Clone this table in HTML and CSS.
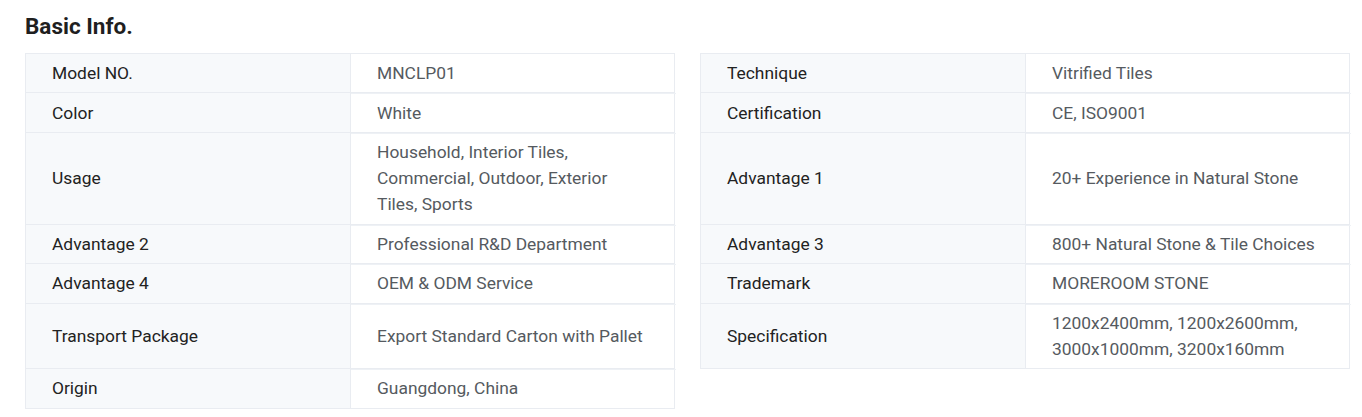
FILE: index.html
```html
<!DOCTYPE html>
<html lang="en">
<head>
<meta charset="utf-8">
<title>Basic Info.</title>
<link rel="stylesheet" href="styles.css">
</head>
<body>
<section class="basic-info">
  <h2 class="title">Basic Info.</h2>
  <div class="specs">
    <div class="spec-row">
      <div class="pair"><div class="label">Model NO.</div><div class="value">MNCLP01</div></div>
      <div class="pair"><div class="label">Technique</div><div class="value">Vitrified Tiles</div></div>
    </div>
    <div class="spec-row">
      <div class="pair"><div class="label">Color</div><div class="value">White</div></div>
      <div class="pair"><div class="label">Certification</div><div class="value">CE, ISO9001</div></div>
    </div>
    <div class="spec-row">
      <div class="pair"><div class="label">Usage</div><div class="value">Household, Interior Tiles, Commercial, Outdoor, Exterior Tiles, Sports</div></div>
      <div class="pair"><div class="label">Advantage 1</div><div class="value">20+ Experience in Natural Stone</div></div>
    </div>
    <div class="spec-row">
      <div class="pair"><div class="label">Advantage 2</div><div class="value">Professional R&amp;D Department</div></div>
      <div class="pair"><div class="label">Advantage 3</div><div class="value">800+ Natural Stone &amp; Tile Choices</div></div>
    </div>
    <div class="spec-row">
      <div class="pair"><div class="label">Advantage 4</div><div class="value">OEM &amp; ODM Service</div></div>
      <div class="pair"><div class="label">Trademark</div><div class="value">MOREROOM STONE</div></div>
    </div>
    <div class="spec-row">
      <div class="pair"><div class="label">Transport Package</div><div class="value">Export Standard Carton with Pallet</div></div>
      <div class="pair"><div class="label">Specification</div><div class="value">1200x2400mm, 1200x2600mm, 3000x1000mm, 3200x160mm</div></div>
    </div>
    <div class="spec-row">
      <div class="pair"><div class="label">Origin</div><div class="value">Guangdong, China</div></div>
    </div>
  </div>
</section>
</body>
</html>
```
FILE: styles.css
```css
html, body {
  margin: 0;
  padding: 0;
  background: #ffffff;
}

body {
  font-family: Roboto, "Liberation Sans", Arial, sans-serif;
  font-size: 17.4px;
  color: #222222;
}

.basic-info {
  padding: 0 25px;
}

.title {
  margin: 0 0 13px;
  padding-top: 12px;
  font-size: 22.5px;
  line-height: 28px;
  font-weight: 700;
  color: #1f1f1f;
}

.specs {
  display: flex;
  flex-direction: column;
  width: 1325px;
}

.spec-row {
  display: flex;
  gap: 25px;
}

.pair {
  display: grid;
  grid-template-columns: 325px 325px;
  width: 650px;
  box-sizing: border-box;
  border-left: 1px solid #e9ecf1;
  border-right: 1px solid #e9ecf1;
  border-bottom: 1px solid #e9ecf1;
}

.spec-row:first-child .pair {
  border-top: 1px solid #e9ecf1;
}

.label,
.value {
  display: flex;
  align-items: center;
  padding: 6.1px 26px;
  line-height: 26.25px;
  box-sizing: border-box;
}

.label {
  background: #f7f9fb;
  color: #222222;
  border-right: 1px solid #e9ecf1;
}

.value {
  color: #555a60;
  box-shadow: inset 0 1px 0 #eef1f5;
}

.spec-row:first-child .value {
  box-shadow: none;
}
```
